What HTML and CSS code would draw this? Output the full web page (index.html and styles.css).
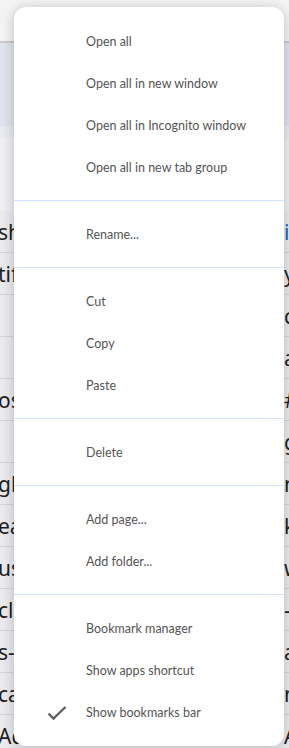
FILE: index.html
```html
<!DOCTYPE html>
<html lang="en">
<head>
    <meta charset="UTF-8">
    <meta name="viewport" content="width=device-width, initial-scale=1.0">
    <title>Bookmarks</title>
    <link rel="stylesheet" href="styles.css">
</head>
<body>
    <div class="page">
        <div class="topbar"></div>
        <div class="band"></div>
        <div class="band-light"></div>
        <div class="gap"></div>

        <div class="rows">
            <div class="row"><span class="l">sh</span><span class="r blue">ic</span></div>
            <div class="row"><span class="l">tif</span><span class="r">y</span></div>
            <div class="row"><span class="l"></span><span class="r">c</span></div>
            <div class="row"><span class="l"></span><span class="r">a</span></div>
            <div class="row"><span class="l">os</span><span class="r">#</span></div>
            <div class="row"><span class="l"></span><span class="r">g</span></div>
            <div class="row"><span class="l">gb</span><span class="r">n</span></div>
            <div class="row"><span class="l">ea</span><span class="r">k</span></div>
            <div class="row"><span class="l">us</span><span class="r">w</span></div>
            <div class="row"><span class="l">cl</span><span class="r">-</span></div>
            <div class="row"><span class="l">s-</span><span class="r">a</span></div>
            <div class="row"><span class="l">ca</span><span class="r">n</span></div>
            <div class="row"><span class="l">Ac</span><span class="r">A</span></div>
        </div>
    </div>

    <div class="menu">
        <div class="item">Open all</div>
        <div class="item">Open all in new window</div>
        <div class="item">Open all in Incognito window</div>
        <div class="item">Open all in new tab group</div>
        <div class="sep"></div>
        <div class="item">Rename...</div>
        <div class="sep"></div>
        <div class="item">Cut</div>
        <div class="item">Copy</div>
        <div class="item">Paste</div>
        <div class="sep"></div>
        <div class="item">Delete</div>
        <div class="sep"></div>
        <div class="item">Add page...</div>
        <div class="item">Add folder...</div>
        <div class="sep"></div>
        <div class="item">Bookmark manager</div>
        <div class="item">Show apps shortcut</div>
        <div class="item checked">
            <svg class="check" width="20" height="14" viewBox="0 0 20 14">
                <path d="M1.5 7.5 L6.5 12.5 L18.5 1" fill="none" stroke="#5f5f5f" stroke-width="2.4"/>
            </svg>
            Show bookmarks bar
        </div>
    </div>
</body>
</html>
```

FILE: styles.css
```css
* {
    margin: 0;
    padding: 0;
    box-sizing: border-box;
}

body {
    width: 289px;
    height: 748px;
    overflow: hidden;
    background: #ededf0;
    font-family: 'Noto Sans', 'Liberation Sans', sans-serif;
    position: relative;
}

/* Страница под меню */
.page {
    width: 100%;
}

.topbar {
    height: 43px;
    background: #f4f4f5;
    border-bottom: 2px solid #c9c9cb;
}

.band {
    height: 83px;
    background: #e0e4ef;
}

.band-light {
    height: 12px;
    background: #e9ebf1;
}

.gap {
    height: 73px;
    background: #f0f0f2;
}

.rows {
    background: #ebebee;
}

.row {
    height: 42px;
    border-bottom: 1px solid #d6d6da;
    display: flex;
    justify-content: space-between;
    align-items: center;
    font-size: 21px;
    color: #1d1d1d;
    overflow: hidden;
}

.row .l {
    margin-left: -2px;
}

.row .r {
    width: 5px;
    white-space: nowrap;
    overflow: visible;
}

.row .blue {
    color: #1a5fc0;
}

/* Контекстне меню */
.menu {
    position: absolute;
    left: 14px;
    top: 7px;
    width: 270px;
    height: 739px;
    background: #fff;
    border-radius: 12px;
    padding: 13px 0;
    box-shadow: 0 2px 14px rgba(0, 0, 0, 0.22);
}

.item {
    height: 42px;
    display: flex;
    align-items: center;
    padding-left: 72px;
    font-family: 'Lato', 'Open Sans', sans-serif;
    font-size: 12.5px;
    color: #555;
    position: relative;
}

.sep {
    height: 1px;
    margin: 12px 0;
    background: #d3e3fd;
}

.check {
    position: absolute;
    left: 33px;
    top: 15px;
}
```
